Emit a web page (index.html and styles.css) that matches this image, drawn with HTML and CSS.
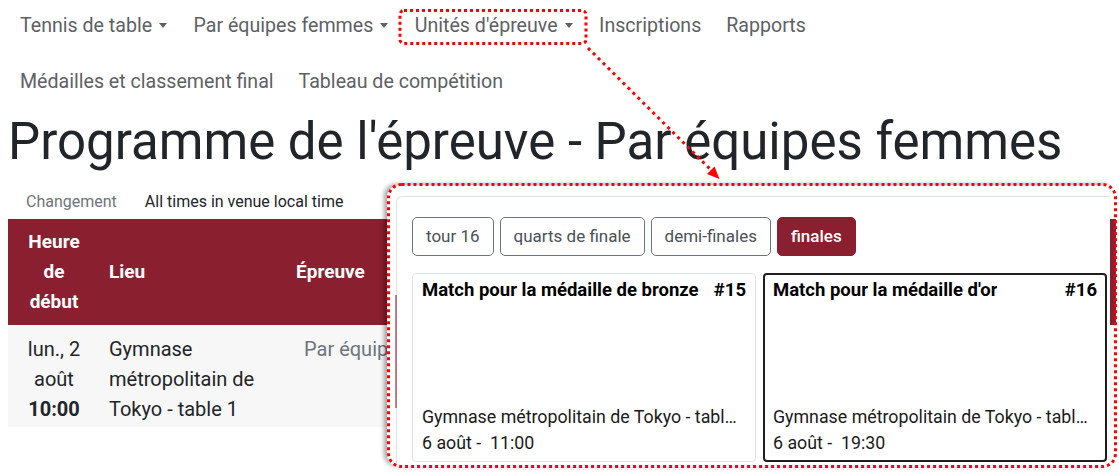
FILE: index.html
```html
<!DOCTYPE html>
<html lang="fr">
<head>
<meta charset="utf-8">
<title>Programme de l'épreuve - Par équipes femmes</title>
<link rel="stylesheet" href="styles.css">
</head>
<body>
<div class="page">
  <nav class="nav">
    <div class="nav-row">
      <a class="nav-link dropdown">Tennis de table</a>
      <a class="nav-link dropdown">Par équipes femmes</a>
      <a class="nav-link dropdown">Unités d'épreuve</a>
      <a class="nav-link">Inscriptions</a>
      <a class="nav-link">Rapports</a>
    </div>
    <div class="nav-row nav-row-2">
      <a class="nav-link">Médailles et classement final</a>
      <a class="nav-link">Tableau de compétition</a>
    </div>
  </nav>
  <h1 class="title">Programme de l'épreuve - Par équipes femmes</h1>
  <div class="info">
    <span class="info-change">Changement</span>
    <span class="info-time">All times in venue local time</span>
  </div>
  <div class="table">
    <div class="thead">
      <div class="th th-time">Heure de début</div>
      <div class="th th-venue">Lieu</div>
      <div class="th th-event">Épreuve</div>
    </div>
    <div class="trow">
      <div class="td td-time">lun., 2 août<strong class="hour">10:00</strong></div>
      <div class="td td-venue">Gymnase métropolitain de Tokyo - table 1</div>
      <div class="td td-event">Par équipes femmes</div>
    </div>
  </div>
</div>

<div class="popup">
  <span class="edge"></span>
  <div class="shot">
    <div class="tabs">
      <button class="tab">tour 16</button>
      <button class="tab">quarts de finale</button>
      <button class="tab">demi-finales</button>
      <button class="tab active">finales</button>
    </div>
    <div class="cards">
      <div class="card">
        <div class="card-head"><span class="card-name">Match pour la médaille de bronze</span><span>#15</span></div>
        <div class="card-foot">
          <div class="venue">Gymnase métropolitain de Tokyo - table 1</div>
          <div class="when">6 août -&nbsp; 11:00</div>
        </div>
      </div>
      <div class="card selected">
        <div class="card-head"><span class="card-name">Match pour la médaille d'or</span><span>#16</span></div>
        <div class="card-foot">
          <div class="venue">Gymnase métropolitain de Tokyo - table 1</div>
          <div class="when">6 août -&nbsp; 19:30</div>
        </div>
      </div>
    </div>
  </div>
</div>

<svg class="annot" width="1119" height="472" viewBox="0 0 1119 472" aria-hidden="true">
  <rect class="dots" x="400" y="10.5" width="186" height="33" rx="4"/>
  <line class="dots dots-line" x1="588" y1="48" x2="711" y2="170"/>
  <polygon points="719.5,179 707,174 714.5,166.5" fill="#ff0000"/>
  <rect class="dots" x="388.5" y="184.5" width="727" height="282" rx="13"/>
</svg>
</body>
</html>
```

FILE: styles.css
```css
* { box-sizing: border-box; }

html, body {
  margin: 0;
  padding: 0;
  background: #ffffff;
}

body {
  position: relative;
  width: 1119px;
  height: 472px;
  overflow: hidden;
  font-family: Roboto, "Liberation Sans", sans-serif;
  color: #212529;
}

.page {
  padding-left: 8px;
}

/* navigation */
.nav {
  display: flex;
  flex-direction: column;
  row-gap: 5px;
}

.nav-row {
  display: flex;
  align-items: center;
  height: 51px;
}

.nav-row-2 {
  height: 50px;
}

.nav-link {
  display: inline-flex;
  align-items: center;
  padding: 0 13px 0 12px;
  font-size: 19.6px;
  line-height: 29px;
  color: #5d6165;
  text-decoration: none;
  white-space: nowrap;
}

.dropdown::after {
  content: "";
  display: inline-block;
  margin: 0 1.5px 0 7px;
  border-top: 5px solid currentColor;
  border-left: 4.5px solid transparent;
  border-right: 4.5px solid transparent;
}

/* title */
.title {
  margin: 2px 0 0;
  font-size: 51px;
  font-weight: 400;
  line-height: 67px;
  color: #212529;
  white-space: nowrap;
}

.info {
  display: flex;
  padding: 13px 0 4px 18px;
  font-size: 16px;
  line-height: 27px;
}

.info-change {
  color: #6c757d;
  margin-right: 28px;
}

.info-time {
  color: #212529;
}

/* table */
.table {
  width: 1108px;
}

.thead,
.trow {
  display: grid;
  grid-template-columns: 92px 188px 1fr;
  line-height: 30px;
}

.thead {
  padding: 8px 0;
  background: #8a1f2f;
  color: #ffffff;
  font-weight: 700;
  font-size: 19px;
}

.th {
  align-self: center;
}

.th-time,
.td-time {
  padding: 0 12px;
  text-align: center;
}

.th-venue,
.td-venue {
  padding: 0 9px;
}

.th-event {
  padding-left: 8px;
}

.trow {
  padding: 9px 0 3px;
  background: #f7f7f7;
  font-size: 20px;
}

.hour {
  display: block;
  font-weight: 700;
}

.td-event {
  padding-left: 16px;
  color: #6c757d;
  white-space: nowrap;
  overflow: hidden;
}

/* popup screenshot */
.popup {
  position: absolute;
  left: 387px;
  top: 185px;
  width: 723px;
  height: 282px;
  background: #ffffff;
  border-radius: 12px 0 0 12px;
  box-shadow: -3px -1px 4px rgba(0, 0, 0, 0.35);
  overflow: hidden;
  z-index: 5;
}

.edge {
  position: absolute;
  left: 8px;
  top: 110px;
  width: 2px;
  height: 113px;
  background: rgba(138, 31, 47, 0.55);
}

.shot {
  height: 100%;
  margin: 11px 0 0 9px;
  padding: 20px 0 0 15px;
  border-left: 1px solid #dee2e6;
  border-top: 1px solid #dee2e6;
  border-top-left-radius: 6px;
}

.tabs {
  display: flex;
  gap: 6px;
}

.tab {
  font-family: inherit;
  font-size: 17px;
  line-height: 29px;
  padding: 4px 13px;
  border: 1px solid #6c757d;
  border-radius: 5px;
  background: #ffffff;
  color: #495057;
  cursor: pointer;
}

.tab.active {
  background: #8a1f2f;
  border-color: #8a1f2f;
  color: #ffffff;
  font-weight: 500;
}

.cards {
  display: grid;
  grid-template-columns: 344px 344px;
  gap: 7px;
  margin-top: 17px;
}

.card {
  display: flex;
  flex-direction: column;
  justify-content: space-between;
  height: 189px;
  padding: 5px 9px 4px;
  border: 1px solid #dfe2e5;
  border-radius: 4px;
}

.card.selected {
  padding: 4px 8px 3px;
  border: 2px solid #1e1e1e;
}

.card-head {
  display: flex;
  justify-content: space-between;
  gap: 8px;
  font-size: 18.5px;
  font-weight: 700;
  line-height: 23px;
  color: #000000;
  white-space: nowrap;
}

.card-name {
  overflow: hidden;
  text-overflow: ellipsis;
}

.card-foot {
  font-size: 17.8px;
  line-height: 26.6px;
  color: #1a1a1a;
}

.venue {
  margin-right: 6px;
  white-space: nowrap;
  overflow: hidden;
  text-overflow: ellipsis;
}

.when {
  white-space: nowrap;
}

/* annotation overlay */
.annot {
  position: absolute;
  left: 0;
  top: 0;
  z-index: 10;
  pointer-events: none;
}

.dots {
  fill: none;
  stroke: #ff0000;
  stroke-width: 3;
  stroke-dasharray: 3 3;
}

.dots-line {
  stroke-dasharray: 3 4;
}
```
